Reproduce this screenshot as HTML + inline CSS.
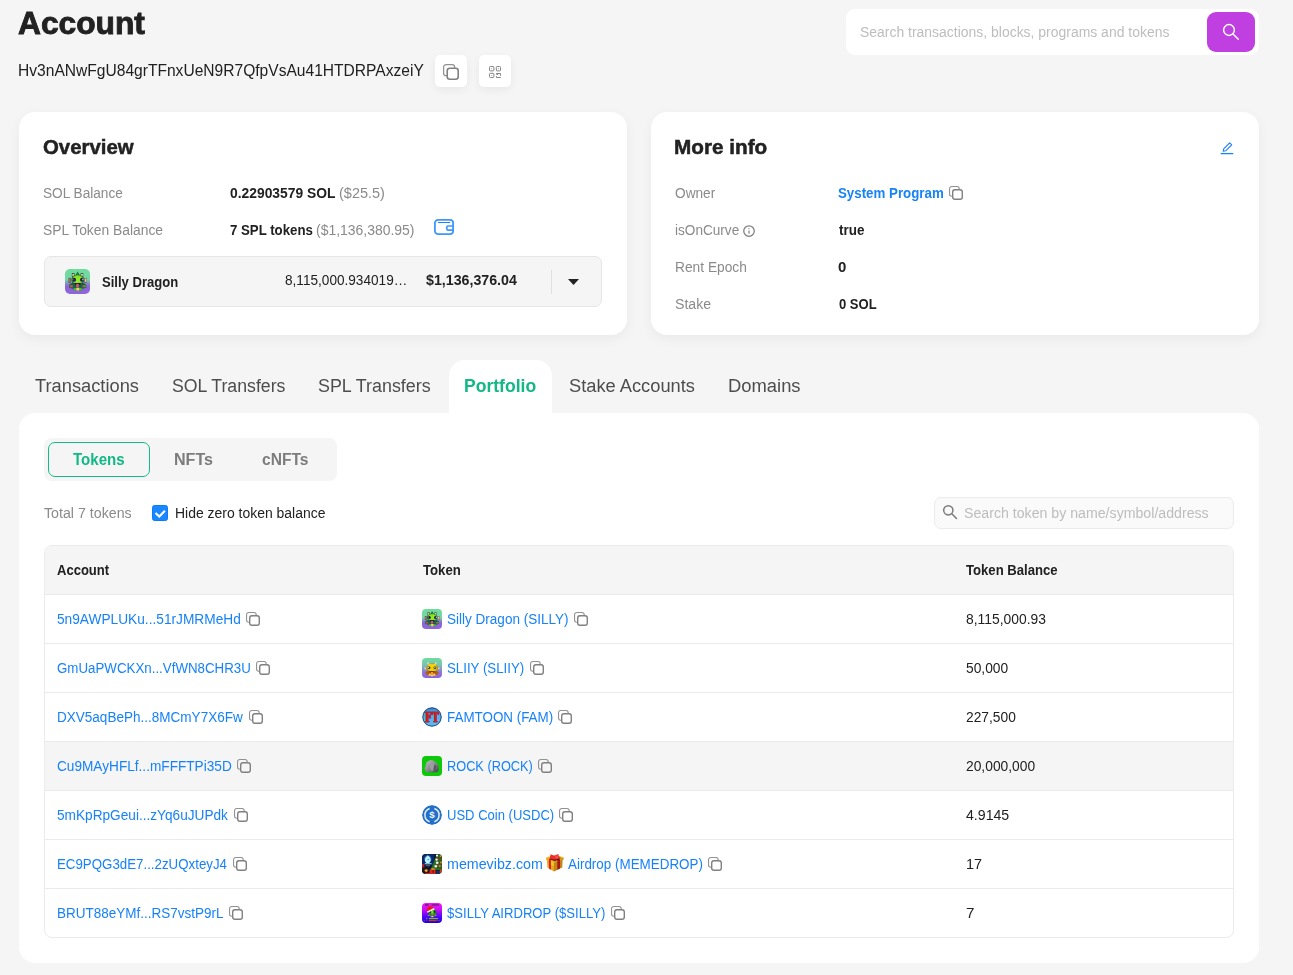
<!DOCTYPE html>
<html lang="en">
<head>
<meta charset="utf-8">
<title>Account</title>
<style>
*{box-sizing:border-box;margin:0;padding:0}
html,body{width:1293px;height:975px;overflow:hidden;background:#f5f5f5}
body{position:relative;font-family:"Liberation Sans",sans-serif;color:#212121;font-size:14px}
.a{position:absolute;white-space:nowrap;line-height:1;transform-origin:0 50%}
.bx{position:absolute}
.card{position:absolute;background:#fff;border-radius:16px;box-shadow:0 4px 13px rgba(0,0,0,.05)}
.h{font-weight:700;color:#222;-webkit-text-stroke:.5px #222}
.h1{-webkit-text-stroke:.9px #222}
.g{color:#8a8a8a}
.b{font-weight:700}
.l{color:#1682fa}
.l2{color:#1783f8}
.gr{color:#12b886}
.sg{color:#7c7c7c}
.tab{color:#4d4d4d}
.ph{color:#bdbdbd}
.ibtn{position:absolute;width:32px;height:32px;background:#fff;border-radius:5px;box-shadow:0 3px 8px rgba(0,0,0,.06)}
.cp{position:absolute;overflow:visible}
.ln{position:absolute;left:45px;width:1188px;height:1px;background:#ebebeb}
.ti{position:absolute;left:422px;width:20px;height:20px;border-radius:4px;overflow:hidden}
</style>
</head>
<body>
<svg width="0" height="0" style="position:absolute">
<defs>
<g id="cpy" fill="none" stroke-linecap="round">
<path d="M10.200 3.100V2.700A2.200 2.200 0 0 0 8 .55H2.750A2.200 2.200 0 0 0 .55 2.750V8a2.200 2.200 0 0 0 2.200 2.200h.4" stroke="#929292" stroke-width="1.100"/>
<rect x="3.700" y="3.700" width="9.600" height="9.600" rx="2.200" stroke="#808080" stroke-width="1.400"/>
</g>
</defs>
</svg>

<!-- header buttons -->
<div class="ibtn" style="left:435px;top:55px">
<svg class="cp" style="left:8px;top:9px" width="16" height="16" viewBox="0 0 14 14"><use href="#cpy"/></svg>
</div>
<div class="ibtn" style="left:479px;top:55px">
<svg class="bx" style="left:10px;top:11px" width="12" height="12" viewBox="0 0 12 12" fill="none" stroke="#858585" stroke-width="1">
<rect x=".5" y=".5" width="4.400" height="4.400" rx=".9"/><rect x="7.300" y=".5" width="4.200" height="4.400" rx=".9"/><rect x=".5" y="7.300" width="4.400" height="4.200" rx=".9"/>
<path d="M7.400 8.600V7.500h4.100v2.300M7.500 7.700l1.700 1.300M7.400 10.100v1.400h4.400"/>
<path d="M2.700 2.300v.9M9.400 2.300v.9M2.300 9.400h.9" stroke-width=".8"/>
</svg>
</div>

<!-- search -->
<div class="bx" style="left:846px;top:9px;width:413px;height:46px;background:#fff;border-radius:9px"></div>
<div class="bx" style="left:1207px;top:12px;width:48px;height:40px;background:#c03fe0;border-radius:9px">
<svg class="bx" style="left:14px;top:10px" width="20" height="20" viewBox="0 0 20 20" fill="none" stroke="#fff" stroke-width="1.500" stroke-linecap="round"><circle cx="8" cy="8" r="5.400"/><path d="M12 12l5.300 5.300"/></svg>
</div>

<!-- overview card -->
<div class="card" style="left:19px;top:112px;width:608px;height:223px"></div>
<div class="bx" style="left:44px;top:256px;width:558px;height:51px;background:#f5f5f5;border:1px solid #e6e6e6;border-radius:7px"></div>
<div class="bx" style="left:551px;top:270px;width:1px;height:24px;background:#e0e0e0"></div>
<svg class="bx" style="left:568px;top:279px" width="11" height="6" viewBox="0 0 11 6"><path d="M0 0h11L5.500 6z" fill="#222"/></svg>
<!-- wallet icon -->
<svg class="bx" style="left:434px;top:219px" width="20" height="16" viewBox="0 0 20 16" fill="none" stroke="#3f97fb" stroke-width="1.800"><rect x=".9" y=".9" width="18.200" height="14.200" rx="3.200"/><path d="M4.500 3.450h11.200" stroke="#1682fa" stroke-width="1.100" stroke-linecap="round"/><path d="M19 7H14a1.200 1.200 0 0 0-1.200 1.200v1.800A1.200 1.200 0 0 0 14 11.200h5" stroke-width="1.700"/></svg>

<!-- more info card -->
<div class="card" style="left:651px;top:112px;width:608px;height:223px"></div>
<svg class="bx" style="left:1220px;top:141px" width="14" height="14" viewBox="0 0 14 14" fill="none" stroke="#1a80f5" stroke-width="1.100" stroke-linejoin="round"><path d="M.7 12.600h12.600" stroke-width="1.300"/><path d="M3.200 10.300l.5-2.500 6-6 2 2-6 6z"/></svg>
<svg class="bx" style="left:743px;top:225px" width="12" height="12" viewBox="0 0 12 12" fill="none" stroke="#7e7e7e" stroke-width="1.250"><circle cx="6" cy="6" r="5.250"/><path d="M6 5.400v3.300" stroke="#9a9a9a" stroke-width="1.500"/><path d="M5.300 3.700h1.400" stroke="#9a9a9a" stroke-width="1"/></svg>

<!-- tabs / panel -->
<div class="bx" style="left:449px;top:360px;width:103px;height:60px;background:#fff;border-radius:16px 16px 0 0"></div>
<div class="bx" style="left:19px;top:413px;width:1240px;height:550px;background:#fff;border-radius:16px"></div>
<div class="bx" style="left:44px;top:438px;width:293px;height:43px;background:#f5f5f5;border-radius:8px"></div>
<div class="bx" style="left:48px;top:442px;width:102px;height:35px;border:1px solid #14ba8a;border-radius:7px"></div>

<!-- checkbox -->
<div class="bx" style="left:152px;top:505px;width:16px;height:16px;background:#1a86ff;border:1px solid #0a7bff;border-radius:2.500px">
<svg class="bx" style="left:-1px;top:-1px" width="16" height="16" viewBox="0 0 16 16" fill="none" stroke="#fff" stroke-width="2.100"><path d="M3.500 8l3.800 3.500 5.600-5.700"/></svg>
</div>

<!-- token search -->
<div class="bx" style="left:934px;top:497px;width:300px;height:32px;background:#fafafa;border:1px solid #ebebeb;border-radius:7px"></div>
<svg class="bx" style="left:942px;top:504px" width="16" height="16" viewBox="0 0 16 16" fill="none" stroke="#7a7a7a" stroke-width="1.500" stroke-linecap="round"><circle cx="6.300" cy="6.300" r="4.600"/><path d="M9.800 9.800l4.700 4.700"/></svg>

<!-- table -->
<div class="bx" style="left:44px;top:545px;width:1190px;height:393px;border:1px solid #ebebeb;border-radius:8px;background:#fff;overflow:hidden">
<div class="bx" style="left:0;top:0;width:1188px;height:49px;background:#f5f5f5"></div>
<div class="bx" style="left:0;top:196px;width:1188px;height:49px;background:#f5f5f5"></div>
</div>
<div class="ln" style="top:594px"></div>
<div class="ln" style="top:643px"></div>
<div class="ln" style="top:692px"></div>
<div class="ln" style="top:741px"></div>
<div class="ln" style="top:790px"></div>
<div class="ln" style="top:839px"></div>
<div class="ln" style="top:888px"></div>

<svg width="0" height="0" style="position:absolute">
<defs>
<filter id="bl" x="-10%" y="-10%" width="120%" height="120%"><feGaussianBlur stdDeviation=".35"/></filter>
<filter id="bl2" x="-10%" y="-10%" width="120%" height="120%"><feGaussianBlur stdDeviation=".6"/></filter>
<linearGradient id="gd1" x1="0" y1="0" x2="0" y2="1"><stop offset="0" stop-color="#6fdc9b"/><stop offset=".42" stop-color="#74d6a6"/><stop offset=".68" stop-color="#8b66d6"/><stop offset="1" stop-color="#8e66dc"/></linearGradient>
<linearGradient id="gd2" x1="0" y1="0" x2="0" y2="1"><stop offset="0" stop-color="#6fdc9f"/><stop offset=".35" stop-color="#78c4b0"/><stop offset=".7" stop-color="#8a7ad8"/><stop offset="1" stop-color="#8a60e2"/></linearGradient>
<linearGradient id="gd3" x1="0" y1="0" x2="0" y2="1"><stop offset="0" stop-color="#3a88d4"/><stop offset=".45" stop-color="#58aee8"/><stop offset="1" stop-color="#62b8ee"/></linearGradient>
<linearGradient id="gd4" x1="0" y1="0" x2="1" y2="1"><stop offset="0" stop-color="#c4c4c8"/><stop offset=".5" stop-color="#8c8c92"/><stop offset="1" stop-color="#3e3e48"/></linearGradient>
<linearGradient id="gd7" x1="0" y1="0" x2="0" y2="1"><stop offset="0" stop-color="#f414f0"/><stop offset=".3" stop-color="#d010f4"/><stop offset=".65" stop-color="#5a08f6"/><stop offset="1" stop-color="#1200ee"/></linearGradient>
<radialGradient id="gfl" cx=".5" cy=".5" r=".5"><stop offset="0" stop-color="#e8fbff"/><stop offset=".5" stop-color="#74d0fa"/><stop offset="1" stop-color="#1a5ab8" stop-opacity="0"/></radialGradient>
<!-- green silly dragon, 20x20 -->
<g id="drg">
<rect width="20" height="20" fill="url(#gd1)"/>
<g filter="url(#bl)">
<path d="M7.600 6.400l2.500-4.400 2.500 4.400z" fill="#1e6a34"/>
<path d="M9.200 5.800l.9-2.600.9 2.600z" fill="#3fae32"/>
<rect x="5.500" y="3.300" width="2.100" height="3" fill="#2a3a38"/><rect x="12.500" y="3.300" width="2.100" height="3" fill="#2a3a38"/>
<rect x="5.900" y="3.900" width="1.300" height="2" fill="#e8cf9c"/><rect x="12.900" y="3.900" width="1.300" height="2" fill="#efe2b8"/>
<rect x="2.800" y="7.100" width="1.900" height="4" fill="#5a4a52"/><rect x="15.500" y="7.100" width="1.900" height="4" fill="#5a4a52"/>
<rect x="3.100" y="7.600" width="1.300" height="3" fill="#b0705a"/><rect x="15.900" y="7.500" width="1.300" height="3" fill="#e8c890"/>
<path d="M3.400 12.300l2.400-1.400h8.600l2.400 1.400.3 2.400-3 1H6l-2.900-1z" fill="#1b5a52"/>
<path d="M3.700 13h2.600v1.500H3.700zM13.900 13h2.600v1.500h-2.600z" fill="#c0603c"/>
<path d="M15 13h1.500v1.500H15z" fill="#3fa830"/>
<ellipse cx="10.200" cy="8.600" rx="5.200" ry="4.200" fill="#1d6434"/>
<ellipse cx="10.200" cy="8.500" rx="4.300" ry="3.500" fill="#84e024"/>
<path d="M8.600 6l1.600 2 1.600-2 .4 4.600H8.200z" fill="#92ec2a"/>
<ellipse cx="7.300" cy="8.500" rx="1.500" ry="1.600" fill="#211b3a"/><ellipse cx="13.500" cy="8.500" rx="1.500" ry="1.600" fill="#211b3a"/>
<rect x="13.900" y="7.700" width=".9" height="1.300" fill="#e4e6e0"/><rect x="6" y="7.900" width=".7" height="1" fill="#8a8aa8"/>
<rect x="6.600" y="9.500" width="1.300" height=".8" fill="#2f5aa0"/><rect x="13" y="9.500" width="1.300" height=".8" fill="#2f5aa0"/>
<path d="M7.400 11.100h5.400l-.8 1.500H8.200z" fill="#10202c"/>
<ellipse cx="10" cy="13.200" rx="1.150" ry="1.600" fill="#ea506a"/>
<rect x="6.900" y="15.100" width="6.800" height="2" fill="#2f8a24"/>
<rect x="7.200" y="15.300" width="1.900" height="1.700" fill="#4cc02a"/><rect x="11.500" y="15.300" width="1.900" height="1.700" fill="#4cc02a"/>
<rect x="9.100" y="15" width="2.300" height="2.200" fill="#f4d070"/>
</g>
</g>
<!-- yellow dragon -->
<g id="drg2">
<rect width="20" height="20" fill="url(#gd2)"/>
<g filter="url(#bl)">
<rect x="5.400" y="4.200" width="1.300" height="2.200" fill="#f3d6c0"/><rect x="13.200" y="4.200" width="1.300" height="2.200" fill="#f3d6c0"/>
<path d="M2.400 9.600h2v1.600h-2zM15.600 9.600h2v1.600h-2z" fill="#e8d0a0"/>
<path d="M3 15l2.400-2.200h9.200L17 15l-1.600 1.800H4.600z" fill="#b8581c"/>
<ellipse cx="10.200" cy="10" rx="5.800" ry="4.400" fill="#b8860a"/>
<ellipse cx="10.200" cy="9.800" rx="5" ry="3.700" fill="#f2cc0e"/>
<path d="M6 6.400l2.400-.6 1.800 1.600 1.800-1.600 2.400.6-.6 2H6.600z" fill="#f4d410"/>
<ellipse cx="7" cy="9.700" rx="1.400" ry="1.300" fill="#231a34"/><ellipse cx="13" cy="9.700" rx="1.400" ry="1.300" fill="#231a34"/>
<rect x="5.800" y="9" width="1" height="1" fill="#fff"/><rect x="12.400" y="9" width="1" height="1" fill="#fff"/>
<rect x="6.600" y="10.400" width="1.200" height=".9" fill="#1fae9c"/><rect x="12.400" y="10.400" width="1.200" height=".9" fill="#1fae9c"/>
<path d="M7.200 13.200h5.600l-.8 1.500H8z" fill="#5a1410"/>
<path d="M8 14h4v.9H8z" fill="#d82c18"/>
<ellipse cx="10" cy="15" rx="1" ry="1.300" fill="#f6b218"/>
<path d="M6.400 17.200l1-1.600h1.400v2.200H6.400zM13.600 17.200l-1-1.600h-1.400v2.200h2.400z" fill="#f8e010"/>
<rect x="8.900" y="16.600" width="2.200" height="1.600" fill="#f4d8b0"/>
</g>
</g>
<!-- rock -->
<g id="rck">
<rect width="20" height="20" fill="#0ec80a"/>
<g filter="url(#bl)">
<path d="M8.300 4l3 .6 4.800 3.700.6 5.200-1.200 2.500-5.200.4-6-.4-1.700-3.100 2-6.600z" fill="url(#gd4)"/>
<path d="M9 8l1.600-1 1.400 2.400-1 5.600-1.600.6-1.400-4z" fill="#a4a6aa" opacity=".7"/>
<path d="M12.200 9.300l1.200-.4.400 2.200-1.800 3.400z" fill="#3c3c44" opacity=".7"/>
</g>
</g>
<!-- memevibz -->
<g id="mmv">
<rect width="20" height="20" fill="#0b1836"/>
<g filter="url(#bl2)">
<rect x="0" y="0" width="12" height="11" fill="#0c2766"/>
<path d="M15.200-.5L20.500 2v14h-12z" fill="#296e24"/>
<path d="M16 1l4 2v12l-5-1z" fill="#3a5a1c"/>
<circle cx="5.800" cy="5" r="4.400" fill="url(#gfl)"/>
<path d="M5.800 1.200c1.800 2 2.800 3.600 2.800 5a2.800 2.800 0 0 1-5.600 0c0-1.400 1-3 2.800-5z" fill="#c6f2ff"/>
<circle cx="6.200" cy="5.600" r=".9" fill="#36a8f0"/>
<rect x="2.800" y="9" width="6.800" height="1.300" fill="#6cc6e6"/>
<rect x="4" y="11.200" width="4" height=".9" fill="#8a6a4a"/>
<circle cx="15" cy="1.600" r="1.100" fill="#f4f6f2"/><circle cx="14.600" cy="5.600" r="1.200" fill="#eef0ee"/><circle cx="15.200" cy="8.800" r="1.300" fill="#f4f6f4"/><circle cx="13.800" cy="12.200" r="1.300" fill="#f0f2f0"/>
<circle cx="15.600" cy="4.200" r=".7" fill="#e02a1c"/><circle cx="15.800" cy="11.200" r=".7" fill="#e02a1c"/>
<circle cx="18.600" cy="2.200" r=".9" fill="#e8821c"/><circle cx="19" cy="8.400" r=".9" fill="#f0921c"/><circle cx="17.800" cy="12" r="1.100" fill="#b88a5a"/>
<rect x="0" y="10" width="2.400" height="3.400" fill="#b81c28"/>
<rect x="0" y="14" width="7" height="6" fill="#1a1418"/>
<ellipse cx="4.200" cy="16.600" rx="1.600" ry="1.400" fill="#f2a040"/>
<rect x="7.600" y="15.400" width="6" height="4.600" fill="#da2a14"/>
<rect x="10.600" y="16" width="1" height="4" fill="#5a1010"/>
<rect x="14.400" y="16.600" width="3.400" height="3.400" fill="#16305e"/>
<rect x="17.800" y="15.800" width="2.200" height="3" fill="#e03a18"/>
<ellipse cx="11" cy="15" rx="2" ry=".8" fill="#f0a818"/>
<rect x="3" y="18.800" width="9" height="1.200" fill="#c8202c"/>
</g>
</g>
<!-- $silly airdrop -->
<g id="sad">
<rect width="20" height="20" fill="url(#gd7)"/>
<g filter="url(#bl)">
<rect x="3" y="1.200" width="3.600" height="1.500" fill="#6a1a78"/><rect x="9.600" y="1.200" width="7.400" height="1.500" fill="#7a1c8c"/>
<ellipse cx="10.400" cy="10" rx="3.900" ry="4" fill="#1f7436"/>
<rect x="9.200" y="7.400" width="2.400" height="3.600" fill="#7ee018"/>
<ellipse cx="8.300" cy="8.800" rx=".8" ry=".9" fill="#221a3a"/><ellipse cx="12.500" cy="8.800" rx=".8" ry=".9" fill="#221a3a"/>
<path d="M7 10.400h6.800v2.400H7z" fill="#2c9a2c" opacity=".8"/>
<ellipse cx="10.200" cy="11.800" rx="1" ry=".8" fill="#ec3c78"/>
<rect x="8.600" y="12.800" width="3.400" height="1.400" fill="#3aa830"/>
<rect x="9.400" y="13" width="1.800" height="1.200" fill="#f4b898"/>
<rect x="5.800" y="12" width="1.300" height="1" fill="#c88a50"/><rect x="13" y="12" width="1.300" height="1" fill="#c88a50"/>
<path d="M5 7.600c-.2-2.600 1.200-4.400 3.200-4.400 1.800 0 2.800 1 3.600 2.200L5.800 8.600z" fill="#f01414"/>
<path d="M5 8.600l6.800-3.600 1 1.200-7.200 3.600z" fill="#f2f2f2"/>
<rect x="4" y="15" width="1.400" height="1.200" fill="#6a8a3a"/><rect x="7" y="15" width="9" height="1.200" fill="#86b41c"/>
<rect x="1.600" y="17.200" width="1.400" height=".9" fill="#b03a30"/><rect x="4.200" y="17.200" width="1" height=".9" fill="#b03a30"/><rect x="6.800" y="17" width="7.600" height="1.200" fill="#c2401c"/><rect x="14.800" y="17.300" width="3.200" height=".7" fill="#a03a50"/>
</g>
</g>
</defs>
</svg>

<!-- big silly dragon icon -->
<svg class="bx" style="left:65px;top:269px;border-radius:5px" width="25" height="25" viewBox="0 0 20 20"><use href="#drg"/></svg>
<!-- row icons -->
<svg class="ti" style="top:609px" viewBox="0 0 20 20"><use href="#drg"/></svg>
<svg class="ti" style="top:658px" viewBox="0 0 20 20"><use href="#drg2"/></svg>
<svg class="ti" style="top:707px;border-radius:10px" viewBox="0 0 20 20">
<circle cx="10" cy="10" r="10" fill="#66b8ee"/><circle cx="10" cy="10" r="9.200" fill="url(#gd3)" stroke="#1c2c50" stroke-width=".8"/>
<text transform="translate(3.150,15.300) scale(.76,1)" font-family="DejaVu Serif,Liberation Serif,serif" font-weight="700" font-size="12" fill="#3a1420" stroke="#3a1420" stroke-width=".5"><tspan x="0">F</tspan><tspan x="9.300">T</tspan></text>
<text transform="translate(2.850,15) scale(.76,1)" font-family="DejaVu Serif,Liberation Serif,serif" font-weight="700" font-size="12" fill="#d81c1e" stroke="#d81c1e" stroke-width=".45"><tspan x="0">F</tspan><tspan x="9.300">T</tspan></text>
</svg>
<svg class="ti" style="top:756px" viewBox="0 0 20 20"><use href="#rck"/></svg>
<svg class="ti" style="top:805px;border-radius:10px" viewBox="0 0 20 20">
<circle cx="10" cy="10" r="10" fill="#2470c8"/>
<path d="M7.600 3.500a7 7 0 0 0 0 13.200M12.400 3.500a7 7 0 0 1 0 13.200" fill="none" stroke="#e4eefa" stroke-width="1.500"/>
<text x="10" y="13.400" text-anchor="middle" font-family="Liberation Sans,sans-serif" font-weight="700" font-size="9.800" fill="#f0f6ff">$</text>
</svg>
<svg class="ti" style="top:854px" viewBox="0 0 20 20"><use href="#mmv"/></svg>
<svg class="ti" style="top:903px" viewBox="0 0 20 20"><use href="#sad"/></svg>
<!-- gift emoji -->
<svg class="bx" style="left:546px;top:854px" width="18" height="18" viewBox="0 0 18 18">
<g filter="url(#bl)">
<path d="M.9 5.500L8 8.500v9L1.400 13.500z" fill="#eaa61a"/>
<path d="M8 8.500l8.700-3.200-.5 8.200L8 17.500z" fill="#c08612"/>
<path d="M.2 3.300L9.500 1l8.100 2.300L8 6.200z" fill="#f2bc1c"/>
<path d="M.2 3.300L8 6v2.800L.2 5.900z" fill="#eeb01a"/>
<path d="M8 6l9.600-2.700v2.500L8 8.800z" fill="#d09a14"/>
<path d="M2.900 4.200l2 .7v10.800l-1.900-1.300z" fill="#dc1c22"/>
<path d="M11.300 5l2.700-.8v10.300l-2.700 1.300z" fill="#a8141e"/>
<path d="M3.800 4.400L4.600.2l3.600 1.600L12.200 0l1.500 4.400-5.200 1.800z" fill="#ee2a2e"/>
<path d="M4.400 4.400l3.800 1.300 5-1.300.1 1-5 1.500-3.800-1.400z" fill="#5e0a12"/>
<path d="M9.200 1.800l2.600-.9.900 3-2.900.9z" fill="#ff4c50"/>
<path d="M13.200 2.600l1.400.6-.4 1.400-1-.6z" fill="#7a6a10"/>
<path d="M5.100 7.600l2.500 1.100v3.200L5.100 10.800z" fill="#f6d61c" opacity=".85"/>
</g>
</svg>


<div class="a h h1" id="account" style="left:18.12px;top:7px;font-size:32px;transform:scaleX(0.9917);">Account</div>
<div class="a" id="addr" style="left:17.63px;top:63px;font-size:16px;transform:scaleX(0.9739);">Hv3nANwFgU84grTFnxUeN9R7QfpVsAu41HTDRPAxzeiY</div>
<div class="a ph" id="search" style="left:860.41px;top:25px;font-size:14px;transform:scaleX(0.9964);">Search transactions, blocks, programs and tokens</div>
<div class="a h" id="ov" style="left:43.27px;top:137px;font-size:20px;transform:scaleX(1.019);">Overview</div>
<div class="a g" id="solbal" style="left:43.4px;top:186px;font-size:14px;transform:scaleX(0.9735);">SOL Balance</div>
<div class="a b" id="solv" style="left:229.87px;top:186px;font-size:14px;transform:scaleX(0.9886);">0.22903579 SOL</div>
<div class="a g" id="solu" style="left:338.51px;top:186px;font-size:14px;transform:scaleX(1.0344);">($25.5)</div>
<div class="a g" id="splbal" style="left:43.39px;top:223px;font-size:14px;transform:scaleX(0.9888);">SPL Token Balance</div>
<div class="a b" id="splv" style="left:229.67px;top:223px;font-size:14px;transform:scaleX(0.9452);">7 SPL tokens</div>
<div class="a g" id="splu" style="left:315.57px;top:223px;font-size:14px;transform:scaleX(0.9964);">($1,136,380.95)</div>
<div class="a b" id="sd" style="left:101.83px;top:275px;font-size:14px;transform:scaleX(0.9322);">Silly Dragon</div>
<div class="a" id="sdamt" style="left:285.44px;top:273px;font-size:14px;transform:scaleX(0.9719);">8,115,000.934019…</div>
<div class="a b" id="sdusd" style="left:425.85px;top:273px;font-size:14px;transform:scaleX(1.0147);">$1,136,376.04</div>
<div class="a h" id="mi" style="left:674.39px;top:137px;font-size:20px;transform:scaleX(1.0356);">More info</div>
<div class="a g" id="owner" style="left:675.38px;top:186px;font-size:14px;transform:scaleX(0.9759);">Owner</div>
<div class="a b l2" id="sysprog" style="left:838.4px;top:186px;font-size:14px;transform:scaleX(0.95);">System Program</div>
<div class="a g" id="ioc" style="left:675.39px;top:223px;font-size:14px;transform:scaleX(0.9709);">isOnCurve</div>
<div class="a b" id="true" style="left:838.88px;top:223px;font-size:14px;transform:scaleX(0.961);">true</div>
<div class="a g" id="rent" style="left:674.94px;top:260px;font-size:14px;transform:scaleX(0.9826);">Rent Epoch</div>
<div class="a b" id="zero" style="left:838.23px;top:260px;font-size:14px;transform:scaleX(1.0689);">0</div>
<div class="a g" id="stake" style="left:675.39px;top:297px;font-size:14px;transform:scaleX(1.01);">Stake</div>
<div class="a b" id="zsol" style="left:838.5px;top:297px;font-size:14px;transform:scaleX(0.9303);">0 SOL</div>
<div class="a tab" id="tab1" style="left:35.07px;top:377px;font-size:18px;transform:scaleX(1.0157);">Transactions</div>
<div class="a tab" id="tab2" style="left:172.16px;top:377px;font-size:18px;transform:scaleX(0.9826);">SOL Transfers</div>
<div class="a tab" id="tab3" style="left:318.35px;top:377px;font-size:18px;transform:scaleX(0.9935);">SPL Transfers</div>
<div class="a b gr" id="tab4" style="left:464.46px;top:377px;font-size:18px;transform:scaleX(0.9748);">Portfolio</div>
<div class="a tab" id="tab5" style="left:569.39px;top:377px;font-size:18px;transform:scaleX(1.0152);">Stake Accounts</div>
<div class="a tab" id="tab6" style="left:728.27px;top:377px;font-size:18px;transform:scaleX(1.0217);">Domains</div>
<div class="a b gr" id="seg1" style="left:73.44px;top:452px;font-size:16px;transform:scaleX(0.9409);">Tokens</div>
<div class="a b sg" id="seg2" style="left:173.86px;top:452px;font-size:16px;transform:scaleX(1.0054);">NFTs</div>
<div class="a b sg" id="seg3" style="left:262.26px;top:452px;font-size:16px;transform:scaleX(0.9739);">cNFTs</div>
<div class="a g" id="total" style="left:44.29px;top:506px;font-size:14px;transform:scaleX(1.0153);">Total 7 tokens</div>
<div class="a" id="hide" style="left:175.29px;top:506px;font-size:14px;transform:scaleX(0.9963);">Hide zero token balance</div>
<div class="a ph" id="tsearch" style="left:964.46px;top:506px;font-size:14px;transform:scaleX(1.011);">Search token by name/symbol/address</div>
<div class="a b" id="th1" style="left:56.87px;top:563px;font-size:14px;transform:scaleX(0.9308);">Account</div>
<div class="a b" id="th2" style="left:422.64px;top:563px;font-size:14px;transform:scaleX(0.9401);">Token</div>
<div class="a b" id="th3" style="left:966.17px;top:563px;font-size:14px;transform:scaleX(0.9371);">Token Balance</div>
<div class="a l" id="acc0" style="left:56.69px;top:612px;font-size:14px;transform:scaleX(0.9788);">5n9AWPLUKu...51rJMRMeHd</div>
<div class="a l" id="tok0" style="left:446.64px;top:612px;font-size:14px;transform:scaleX(0.9662);">Silly Dragon (SILLY)</div>
<div class="a" id="bal0" style="left:965.5px;top:612px;font-size:14px;transform:scaleX(0.99);">8,115,000.93</div>
<div class="a l" id="acc1" style="left:56.69px;top:661px;font-size:14px;transform:scaleX(0.9513);">GmUaPWCKXn...VfWN8CHR3U</div>
<div class="a l" id="tok1" style="left:446.64px;top:661px;font-size:14px;transform:scaleX(0.9482);">SLIIY (SLIIY)</div>
<div class="a" id="bal1" style="left:965.5px;top:661px;font-size:14px;transform:scaleX(0.9852);">50,000</div>
<div class="a l" id="acc2" style="left:56.69px;top:710px;font-size:14px;transform:scaleX(0.9664);">DXV5aqBePh...8MCmY7X6Fw</div>
<div class="a l" id="tok2" style="left:446.64px;top:710px;font-size:14px;transform:scaleX(0.9567);">FAMTOON (FAM)</div>
<div class="a" id="bal2" style="left:965.5px;top:710px;font-size:14px;transform:scaleX(0.9841);">227,500</div>
<div class="a l" id="acc3" style="left:56.69px;top:759px;font-size:14px;transform:scaleX(0.9739);">Cu9MAyHFLf...mFFFTPi35D</div>
<div class="a l" id="tok3" style="left:446.64px;top:759px;font-size:14px;transform:scaleX(0.9118);">ROCK (ROCK)</div>
<div class="a" id="bal3" style="left:965.5px;top:759px;font-size:14px;transform:scaleX(0.9872);">20,000,000</div>
<div class="a l" id="acc4" style="left:56.69px;top:808px;font-size:14px;transform:scaleX(0.9746);">5mKpRpGeui...zYq6uJUPdk</div>
<div class="a l" id="tok4" style="left:446.64px;top:808px;font-size:14px;transform:scaleX(0.9308);">USD Coin (USDC)</div>
<div class="a" id="bal4" style="left:965.5px;top:808px;font-size:14px;transform:scaleX(1.0097);">4.9145</div>
<div class="a l" id="acc5" style="left:56.69px;top:857px;font-size:14px;transform:scaleX(0.9498);">EC9PQG3dE7...2zUQxteyJ4</div>
<div class="a l" id="tok5a" style="left:446.64px;top:857px;font-size:14px;transform:scaleX(1.0184);">memevibz.com</div>
<div class="a l" id="tok5b" style="left:567.96px;top:857px;font-size:14px;transform:scaleX(0.9584);">Airdrop (MEMEDROP)</div>
<div class="a" id="bal5" style="left:965.5px;top:857px;font-size:14px;transform:scaleX(1.0319);">17</div>
<div class="a l" id="acc6" style="left:56.69px;top:906px;font-size:14px;transform:scaleX(0.9641);">BRUT88eYMf...RS7vstP9rL</div>
<div class="a l" id="tok6" style="left:446.64px;top:906px;font-size:14px;transform:scaleX(0.9346);">$SILLY AIRDROP ($SILLY)</div>
<div class="a" id="bal6" style="left:965.5px;top:906px;font-size:14px;transform:scaleX(1.0871);">7</div>
<svg class="cp" style="left:949.1px;top:186.1px" width="14" height="14" viewBox="0 0 14 14"><use href="#cpy"/></svg>
<svg class="cp" style="left:246.2px;top:612.2px" width="14" height="14" viewBox="0 0 14 14"><use href="#cpy"/></svg>
<svg class="cp" style="left:573.5px;top:612.2px" width="14" height="14" viewBox="0 0 14 14"><use href="#cpy"/></svg>
<svg class="cp" style="left:256.2px;top:661.2px" width="14" height="14" viewBox="0 0 14 14"><use href="#cpy"/></svg>
<svg class="cp" style="left:529.6px;top:661.2px" width="14" height="14" viewBox="0 0 14 14"><use href="#cpy"/></svg>
<svg class="cp" style="left:248.8px;top:710.2px" width="14" height="14" viewBox="0 0 14 14"><use href="#cpy"/></svg>
<svg class="cp" style="left:558.4px;top:710.2px" width="14" height="14" viewBox="0 0 14 14"><use href="#cpy"/></svg>
<svg class="cp" style="left:237.3px;top:759.2px" width="14" height="14" viewBox="0 0 14 14"><use href="#cpy"/></svg>
<svg class="cp" style="left:538.0px;top:759.2px" width="14" height="14" viewBox="0 0 14 14"><use href="#cpy"/></svg>
<svg class="cp" style="left:233.5px;top:808.2px" width="14" height="14" viewBox="0 0 14 14"><use href="#cpy"/></svg>
<svg class="cp" style="left:559.4px;top:808.2px" width="14" height="14" viewBox="0 0 14 14"><use href="#cpy"/></svg>
<svg class="cp" style="left:232.9px;top:857.2px" width="14" height="14" viewBox="0 0 14 14"><use href="#cpy"/></svg>
<svg class="cp" style="left:708.0px;top:857.2px" width="14" height="14" viewBox="0 0 14 14"><use href="#cpy"/></svg>
<svg class="cp" style="left:229.4px;top:906.2px" width="14" height="14" viewBox="0 0 14 14"><use href="#cpy"/></svg>
<svg class="cp" style="left:610.5px;top:906.2px" width="14" height="14" viewBox="0 0 14 14"><use href="#cpy"/></svg>
</body>
</html>
